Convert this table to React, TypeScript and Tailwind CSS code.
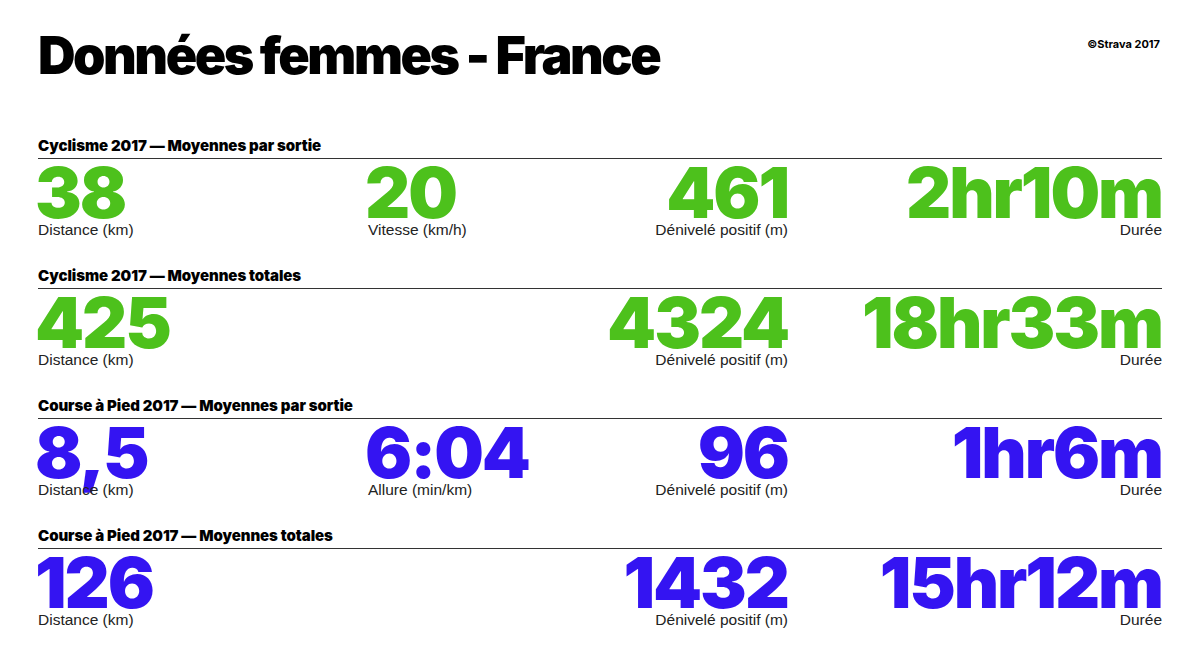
const sections = [
  {
    title: "Cyclisme 2017 — Moyennes par sortie",
    color: "text-[#4dc11c]",
    stats: [
      { value: "38", label: "Distance (km)" },
      { value: "20", label: "Vitesse (km/h)" },
      { value: "461", label: "Dénivelé positif (m)" },
      { value: "2hr10m", label: "Durée" },
    ],
  },
  {
    title: "Cyclisme 2017 — Moyennes totales",
    color: "text-[#4dc11c]",
    stats: [
      { value: "425", label: "Distance (km)" },
      null,
      { value: "4324", label: "Dénivelé positif (m)" },
      { value: "18hr33m", label: "Durée" },
    ],
  },
  {
    title: "Course à Pied 2017 — Moyennes par sortie",
    color: "text-[#3414f2]",
    stats: [
      { value: "8,5", label: "Distance (km)" },
      { value: "6:04", label: "Allure (min/km)" },
      { value: "96", label: "Dénivelé positif (m)" },
      { value: "1hr6m", label: "Durée" },
    ],
  },
  {
    title: "Course à Pied 2017 — Moyennes totales",
    color: "text-[#3414f2]",
    stats: [
      { value: "126", label: "Distance (km)" },
      null,
      { value: "1432", label: "Dénivelé positif (m)" },
      { value: "15hr12m", label: "Durée" },
    ],
  },
];

const App = () => {
  return (
    <div className="w-[1200px] h-[660px] bg-white text-black font-['Inter','Liberation_Sans',sans-serif] px-[38px] pt-[24px]">
      {/* Header */}
      <div className="flex items-start justify-between">
        <h1 className="text-[52px] leading-[64px] font-black tracking-[-0.048em]">
          Données femmes - France
        </h1>
        <div className="text-[11px] font-bold mt-[12px] mr-[2px]">©Strava 2017</div>
      </div>

      <div className="mt-[49px] flex flex-col gap-[28px]">
        {sections.map((section) => (
          <section key={section.title}>
            <div className="text-[15px] leading-[18px] font-black tracking-[-0.005em] pb-[3px] border-b border-[#333]">
              {section.title}
            </div>
            <div className="grid grid-cols-[330px_210px_210px_1fr] mt-[-1px]">
              {section.stats.map((stat, i) => {
                const right = i >= 2;
                return (
                  <div
                    key={i}
                    className={right ? "flex flex-col items-end" : "flex flex-col items-start"}
                  >
                    {stat && (
                      <>
                        <div
                          className={`text-[70px] leading-[56px] mt-[7px] font-black tracking-[-0.03em] ${section.color} ${right ? "mr-0" : "ml-[-3px]"}`}
                        >
                          {stat.value}
                        </div>
                        <div className="text-[15.5px] leading-[18px] text-[#222] font-['Liberation_Sans',sans-serif]">
                          {stat.label}
                        </div>
                      </>
                    )}
                  </div>
                );
              })}
            </div>
          </section>
        ))}
      </div>
    </div>
  );
};

export default App;
